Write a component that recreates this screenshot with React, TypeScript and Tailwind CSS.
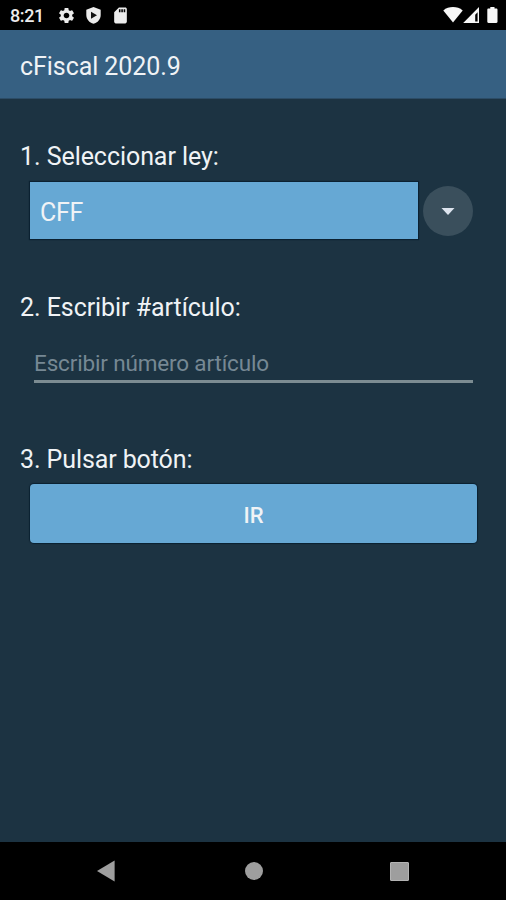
import { useState } from "react";
import { MdSettings, MdSdCard } from "react-icons/md";

const StatusBar = () => {
  return (
    <div className="flex h-[30px] shrink-0 items-start justify-between bg-black pr-[7px] pl-[10px] text-[#ececec]">
      <div className="flex h-[31px] items-center">
        <span className="w-[47px] text-[18px] leading-none font-medium tracking-[-0.4px]">
          8:21
        </span>
        <MdSettings size={19} />
        <svg width="15" height="17" viewBox="0 0 15 17" className="ml-[10px]">
          <path
            d="M7.5 0 0.3 2.8v5.1c0 4.1 3 7.8 7.2 8.9 4.2-1.1 7.2-4.8 7.2-8.9V2.8z"
            fill="currentColor"
          />
          <path d="M5 4.8v7l6-3.5z" fill="#111" />
        </svg>
        <MdSdCard size={19} className="ml-[10px]" />
      </div>
      <div className="flex h-[30px] items-center text-[#f7f7f7]">
        <svg width="56" height="18" viewBox="0 0 56 18" fill="currentColor">
          <path d="M0.3 4.4C5.8 0 14.2 0 19.7 4.4L10 16.6z" />
          <path
            d="M36 1 20.2 17H36zM34.6 6.2v9.2h-2.4V8.7z"
            fillRule="evenodd"
          />
          <path d="M47.3 1h4.2v1.6h1.8c.7 0 1.2.5 1.2 1.2v12c0 .7-.5 1.2-1.2 1.2h-7.8c-.7 0-1.2-.5-1.2-1.2v-12c0-.7.5-1.2 1.2-1.2h1.8z" />
        </svg>
      </div>
    </div>
  );
};

const NavigationBar = () => {
  return (
    <div className="flex h-[58px] shrink-0 items-center bg-black pl-[97px] text-[#9e9e9e]">
      <svg width="18" height="22" viewBox="0 0 18 22" fill="currentColor">
        <path d="M0 11 17.6 0.5v21z" />
      </svg>
      <span className="ml-[130px] size-[18px] rounded-full bg-[#9e9e9e]" />
      <span className="ml-[127px] size-[19px] rounded-[1px] border border-[#b4b4b4] bg-[#9e9e9e]" />
    </div>
  );
};

export default function App() {
  const [article, setArticle] = useState("");

  return (
    <div className="flex h-[900px] w-[506px] flex-col bg-[#1c3342] font-[Roboto,sans-serif] text-[#f0f3f6]">
      <StatusBar />
      <header className="flex h-[69px] shrink-0 items-center border-b border-[#2c4c66] bg-[#366082] px-[20px] pt-[5px]">
        <h1 className="text-[25px] leading-[30px] tracking-[-0.06px]">
          cFiscal 2020.9
        </h1>
      </header>

      <form
        className="flex flex-1 flex-col pt-[43px]"
        onSubmit={(e) => e.preventDefault()}
      >
        <label className="px-[20px] text-[25px] leading-[30px] tracking-[-0.06px]">
          1. Seleccionar ley:
        </label>
        <div className="mt-[10px] flex items-center pl-[30px]">
          <div className="flex h-[57px] w-[388px] items-center bg-[#66a8d4] pt-[4px] pl-[10px] text-[25px] leading-[30px] tracking-[-0.3px] shadow-[0_0_1px_1px_#0b2131]">
            CFF
          </div>
          <button
            type="button"
            className="ml-[5px] flex size-[50px] items-center justify-center rounded-full bg-[#3a4f5c] pt-px"
          >
            <svg width="14" height="7" viewBox="0 0 14 7">
              <path d="M0.5 0h13L7 7z" fill="#dde4ee" />
            </svg>
          </button>
        </div>

        <label className="mt-[54px] px-[20px] text-[25px] leading-[30px] tracking-[-0.06px]">
          2. Escribir #artículo:
        </label>
        <input
          value={article}
          onChange={(e) => setArticle(e.target.value)}
          placeholder="Escribir número artículo"
          className="mt-[20px] mr-[33px] ml-[34px] h-[40px] border-b-[3px] border-[#7c8c92] pt-[3px] text-[22.5px] tracking-[-0.16px] outline-none placeholder:text-[#768894]"
        />

        <label className="mt-[62px] px-[20px] text-[25px] leading-[30px] tracking-[-0.1px]">
          3. Pulsar botón:
        </label>
        <button
          type="submit"
          className="mt-[9px] mr-[29px] ml-[30px] h-[59px] rounded-[4px] bg-[#66a8d4] pt-[3px] text-[22px] font-medium shadow-[0_0_1px_1px_#0b2131]"
        >
          IR
        </button>
      </form>

      <NavigationBar />
    </div>
  );
}
